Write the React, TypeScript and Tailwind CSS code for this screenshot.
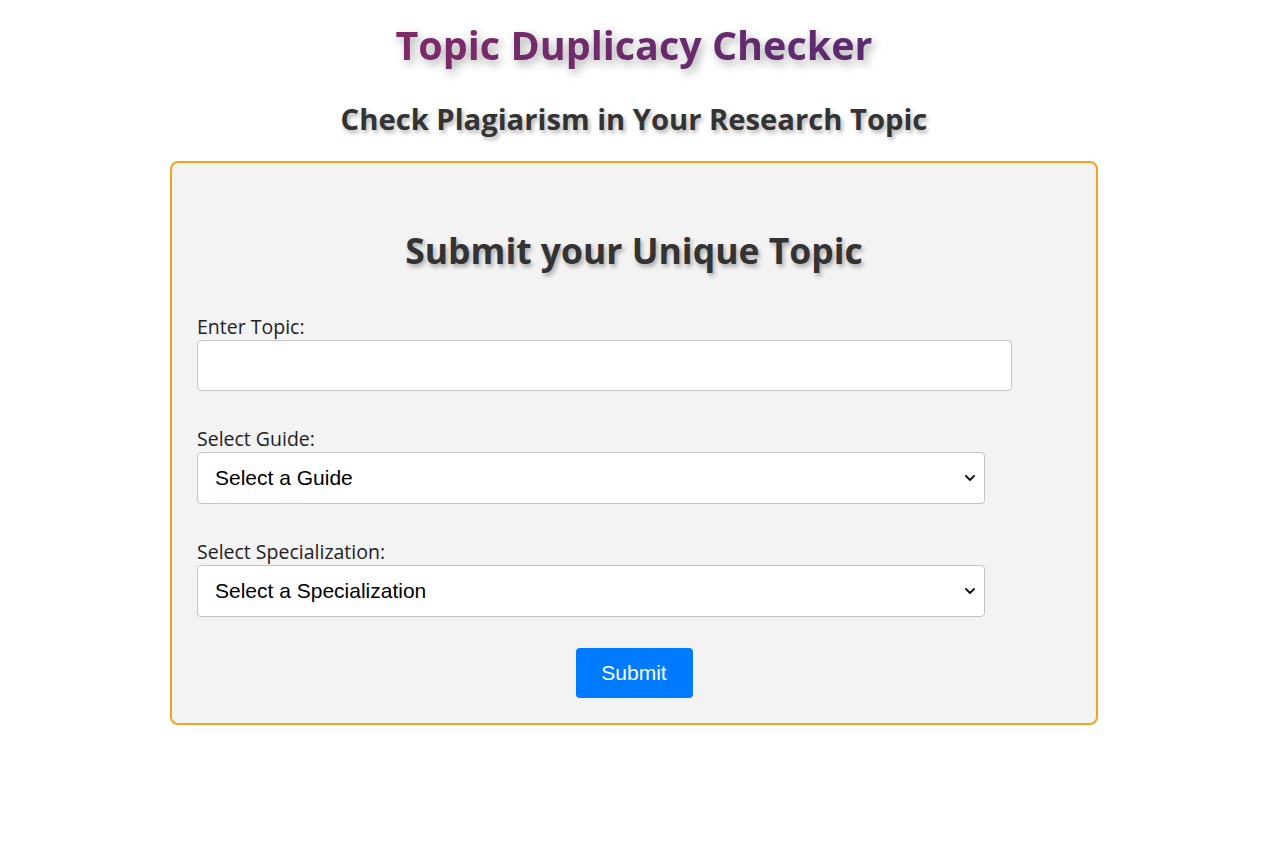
import { useState } from 'react';

const guides = ['Select a Guide'];
const specializations = ['Select a Specialization'];

function Chevron(): React.ReactElement {
  return (
    <svg
      className="pointer-events-none absolute right-[10px] top-1/2 -translate-y-1/2"
      width="10"
      height="7"
      viewBox="0 0 10 7"
      fill="none"
    >
      <path d="M1 1.5 5 5.5 9 1.5" stroke="#111" strokeWidth="1.8" strokeLinecap="round" strokeLinejoin="round" />
    </svg>
  );
}

function SelectField({ label, options }: { label: string; options: string[] }): React.ReactElement {
  return (
    <div className="mt-[35px]">
      <label className="block text-[19.5px] leading-[25px] text-[#222]">{label}</label>
      <div className="relative mt-[1px] w-[788px]">
        <select className="h-[52px] w-full appearance-none rounded-[4px] border border-[#c4c4c4] bg-white pl-[17px] font-['Liberation_Sans',Arial,sans-serif] text-[21px] text-black outline-none">
          {options.map((o) => (
            <option key={o}>{o}</option>
          ))}
        </select>
        <Chevron />
      </div>
    </div>
  );
}

export default function App(): React.ReactElement {
  const [topic, setTopic] = useState('');

  return (
    <div className="min-h-[847px] bg-white pr-[5px] font-['Open_Sans','Noto_Sans',sans-serif] text-[#222]">
      <header className="flex flex-col items-center">
        <h1 className="mt-[19px] inline-block bg-linear-to-r from-[#7e2a68] to-[#5a2a70] bg-clip-text text-[39.5px] font-bold leading-[52px] text-transparent drop-shadow-[3px_4px_5px_rgba(0,0,0,0.33)]">
          Topic Duplicacy Checker
        </h1>
        <h2 className="mt-[30px] text-[29.2px] font-bold leading-[36px] text-[#333] [text-shadow:2px_3px_4px_rgba(0,0,0,0.3)]">
          Check Plagiarism in Your Research Topic
        </h2>
      </header>

      <main className="mx-auto mt-[24px] w-[928px] rounded-[8px] border-2 border-[#f7a21e] bg-[#f3f3f3] px-[25px] pb-[25px] pt-[65px]">
        <h3 className="text-center text-[35.5px] font-bold leading-[44px] text-[#333] [text-shadow:2px_3px_4px_rgba(0,0,0,0.3)]">
          Submit your Unique Topic
        </h3>

        <form className="mt-[42px]" onSubmit={(e) => e.preventDefault()}>
          <div>
            <label className="block text-[19.5px] leading-[25px] text-[#222]">Enter Topic:</label>
            <input
              value={topic}
              onChange={(e) => setTopic(e.target.value)}
              className="mt-[1px] h-[51px] w-[815px] rounded-[4px] border border-[#c4c4c4] bg-white px-3 font-['Liberation_Sans',Arial,sans-serif] text-[20px] outline-none"
            />
          </div>

          <SelectField label="Select Guide:" options={guides} />
          <SelectField label="Select Specialization:" options={specializations} />

          <div className="mt-[31px] flex justify-center">
            <button
              type="submit"
              className="h-[50px] w-[117px] rounded-[4px] bg-[#007bff] font-['Liberation_Sans',Arial,sans-serif] text-[21px] text-white"
            >
              Submit
            </button>
          </div>
        </form>
      </main>
    </div>
  );
}
